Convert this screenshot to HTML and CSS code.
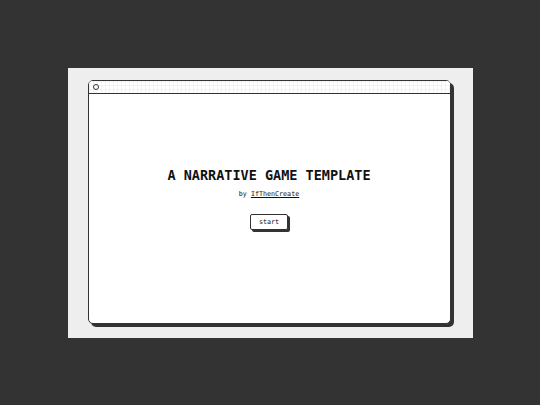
FILE: index.html
```html
<!DOCTYPE html>
<html>
<head>
<meta charset="utf-8">
<link rel="stylesheet" href="styles.css">
</head>
<body>
<div class="stage">
  <div class="panel">
    <div class="window">
      <div class="titlebar"><span class="dot"></span></div>
      <div class="content">
        <h1 class="title">A NARRATIVE GAME TEMPLATE</h1>
        <p class="byline">by <a class="link" href="#">IfThenCreate</a></p>
        <button class="start">start</button>
      </div>
    </div>
  </div>
</div>
</body>
</html>
```
FILE: styles.css
```css
html, body {
  margin: 0;
  padding: 0;
  background: #333333;
  width: 540px;
  height: 405px;
  overflow: hidden;
}
.stage {
  width: 540px;
  height: 405px;
  display: flex;
  align-items: center;
  justify-content: center;
}
.panel {
  width: 405px;
  height: 270px;
  box-sizing: border-box;
  background: #eeeeee;
  padding: 12px 19px 11px 20px;
  display: flex;
}
.window {
  flex: 1;
  background: #ffffff;
  border: 1px solid #333333;
  border-radius: 5px;
  box-shadow: 3px 3px 0 #333333;
  display: flex;
  flex-direction: column;
  overflow: hidden;
  margin-right: 3px;
  margin-bottom: 3px;
}
.titlebar {
  height: 12px;
  border-bottom: 1px solid #333333;
  background-color: #ffffff;
  background-image:
    linear-gradient(#f2f2f2 1px, transparent 1px),
    linear-gradient(90deg, #f2f2f2 1px, transparent 1px);
  background-size: 4px 4px;
  display: flex;
  align-items: center;
  padding-left: 4px;
}
.dot {
  width: 4px;
  height: 4px;
  border: 1px solid #333333;
  border-radius: 50%;
  background: #ffffff;
}
.content {
  flex: 1;
  display: flex;
  flex-direction: column;
  align-items: center;
  padding-top: 73px;
  font-family: "DejaVu Sans Mono", monospace;
  color: #111111;
}
.title {
  margin: 0;
  font-size: 13.5px;
  font-weight: bold;
  line-height: 16px;
  letter-spacing: 0;
}
.byline {
  margin: 7px 0 0 0;
  font-size: 6.7px;
  line-height: 8px;
}
.link,
.link:visited {
  color: #111111;
  text-decoration: underline;
}
.start {
  margin-top: 16px;
  font-family: "DejaVu Sans Mono", monospace;
  font-size: 6.7px;
  color: #111111;
  background: #ffffff;
  border: 1px solid #333333;
  border-radius: 2px;
  box-shadow: 2px 2px 0 #333333;
  width: 38px;
  height: 16px;
  padding: 0;
}
```
